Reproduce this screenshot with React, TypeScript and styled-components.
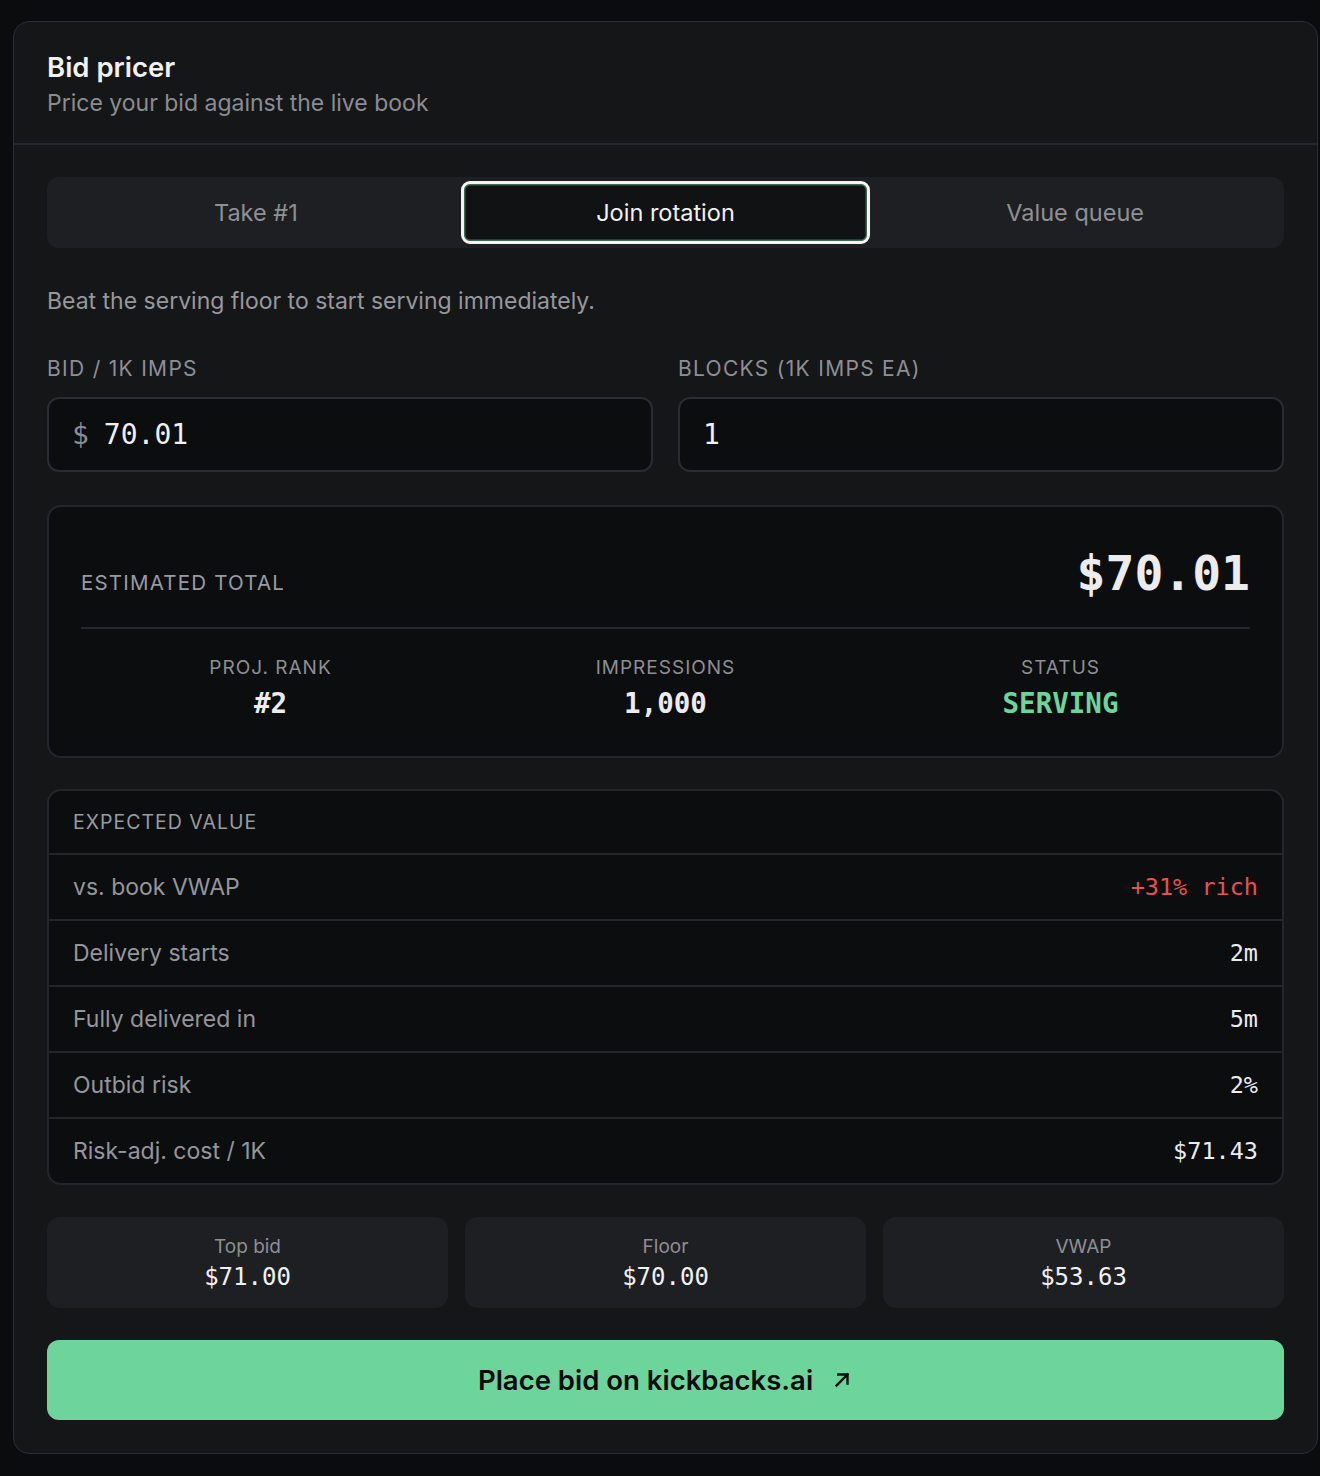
import styled, { createGlobalStyle } from "styled-components";

const GlobalStyle = createGlobalStyle`
  html, body {
    margin: 0;
    background: #0b0c0e;
  }
  body {
    padding: 21px 2px 22px 13px;
    font-family: "Inter", "Noto Sans", sans-serif;
    color: #ececee;
  }
`;

const MONO = `"DejaVu Sans Mono", "Liberation Mono", monospace`;

const tabs = ["Take #1", "Join rotation", "Value queue"];

const evRows = [
  { label: "vs. book VWAP", value: "+31% rich", tone: "bad" },
  { label: "Delivery starts", value: "2m" },
  { label: "Fully delivered in", value: "5m" },
  { label: "Outbid risk", value: "2%" },
  { label: "Risk-adj. cost / 1K", value: "$71.43" },
];

const book = [
  { label: "Top bid", value: "$71.00" },
  { label: "Floor", value: "$70.00" },
  { label: "VWAP", value: "$53.63" },
];

export default function App() {
  return (
    <>
      <GlobalStyle />
      <Card>
        <Header>
          <Title>Bid pricer</Title>
          <Subtitle>Price your bid against the live book</Subtitle>
        </Header>
        <Body>
          <Tabs>
            {tabs.map((t, i) => (
              <Tab key={t} $active={i === 1}>
                {t}
              </Tab>
            ))}
          </Tabs>

          <Hint>Beat the serving floor to start serving immediately.</Hint>

          <Fields>
            <Field>
              <Label>Bid / 1K imps</Label>
              <InputBox>
                <Prefix>$</Prefix>
                <InputValue>70.01</InputValue>
              </InputBox>
            </Field>
            <Field>
              <Label>Blocks (1K imps ea)</Label>
              <InputBox>
                <InputValue>1</InputValue>
              </InputBox>
            </Field>
          </Fields>

          <TotalBox>
            <TotalRow>
              <TotalLabel>Estimated total</TotalLabel>
              <TotalValue>$70.01</TotalValue>
            </TotalRow>
            <Stats>
              <Stat>
                <StatLabel>Proj. rank</StatLabel>
                <StatValue>#2</StatValue>
              </Stat>
              <Stat>
                <StatLabel>Impressions</StatLabel>
                <StatValue>1,000</StatValue>
              </Stat>
              <Stat>
                <StatLabel>Status</StatLabel>
                <StatValue $green>SERVING</StatValue>
              </Stat>
            </Stats>
          </TotalBox>

          <Table>
            <TableHead>Expected value</TableHead>
            {evRows.map((r) => (
              <Row key={r.label}>
                <RowLabel>{r.label}</RowLabel>
                <RowValue $bad={r.tone === "bad"}>{r.value}</RowValue>
              </Row>
            ))}
          </Table>

          <Book>
            {book.map((b) => (
              <BookItem key={b.label}>
                <BookLabel>{b.label}</BookLabel>
                <BookValue>{b.value}</BookValue>
              </BookItem>
            ))}
          </Book>

          <PlaceBtn>
            Place bid on kickbacks.ai
            <svg width="22" height="22" viewBox="0 0 24 24" fill="none" stroke="#0b0c0e" strokeWidth="2.6" strokeLinecap="square">
              <path d="M6 18L18 6" />
              <path d="M8 6h10v10" />
            </svg>
          </PlaceBtn>
        </Body>
      </Card>
    </>
  );
}

const Card = styled.div`
  width: 1305px;
  background: #151618;
  border: 1px solid #2c2d31;
  border-radius: 16px;
  box-sizing: border-box;
`;

const Header = styled.div`
  padding: 28px 33px 25px;
  border-bottom: 2px solid #26272b;
`;

const Title = styled.div`
  font-size: 27.5px;
  font-weight: 600;
  color: #f1f1f3;
  line-height: 34px;
`;

const Subtitle = styled.div`
  font-size: 23px;
  color: #8b8c92;
  line-height: 30px;
  margin-top: 4px;
`;

const Body = styled.div`
  padding: 32px 33px 33px 33px;
  display: flex;
  flex-direction: column;
`;

const Tabs = styled.div`
  display: grid;
  grid-template-columns: repeat(3, 1fr);
  background: #1e1f22;
  border-radius: 12px;
  padding: 4px;
  height: 71px;
  box-sizing: border-box;
`;

const Tab = styled.div<{ $active?: boolean }>`
  display: flex;
  align-items: center;
  justify-content: center;
  font-size: 23.5px;
  border-radius: 9px;
  color: ${(p) => (p.$active ? "#f1f1f3" : "#8f9096")};
  background: ${(p) => (p.$active ? "#111214" : "transparent")};
  border: ${(p) => (p.$active ? "3px solid #f4f5f4" : "3px solid transparent")};
  box-shadow: ${(p) => (p.$active ? "inset 0 0 0 1.5px #3f6b55" : "none")};
`;

const Hint = styled.div`
  font-size: 23px;
  color: #97989e;
  margin-top: 38px;
  line-height: 30px;
`;

const Fields = styled.div`
  display: grid;
  grid-template-columns: 1fr 1fr;
  gap: 25px;
  margin-top: 39px;
`;

const Field = styled.div`
  display: flex;
  flex-direction: column;
`;

const Label = styled.div`
  font-size: 21px;
  letter-spacing: 1.3px;
  text-transform: uppercase;
  color: #8e8f95;
  line-height: 28px;
  margin-bottom: 14px;
`;

const InputBox = styled.div`
  height: 75px;
  box-sizing: border-box;
  background: #0c0d0f;
  border: 2px solid #2b2c30;
  border-radius: 12px;
  display: flex;
  align-items: center;
  padding: 0 23px;
  gap: 15px;
  font-family: ${MONO};
  font-size: 28px;
`;

const Prefix = styled.span`
  color: #8b8c92;
`;

const InputValue = styled.span`
  color: #f1f1f3;
`;

const TotalBox = styled.div`
  margin-top: 33px;
  background: #0c0d0f;
  border: 2px solid #24252a;
  border-radius: 14px;
  padding: 38px 32px 36px;
  display: flex;
  flex-direction: column;
`;

const TotalRow = styled.div`
  display: flex;
  justify-content: space-between;
  align-items: center;
  padding-bottom: 26px;
  border-bottom: 2px solid #26272b;
`;

const TotalLabel = styled.div`
  font-size: 20.5px;
  letter-spacing: 1.2px;
  text-transform: uppercase;
  color: #9a9ba1;
  margin-top: 18px;
`;

const TotalValue = styled.div`
  font-family: ${MONO};
  font-size: 48px;
  font-weight: 700;
  color: #ececee;
  line-height: 56px;
`;

const Stats = styled.div`
  display: grid;
  grid-template-columns: repeat(3, 1fr);
  padding-top: 26px;
  margin: 0 -8px;
`;

const Stat = styled.div`
  display: flex;
  flex-direction: column;
  align-items: center;
  gap: 5px;
`;

const StatLabel = styled.div`
  font-size: 19px;
  letter-spacing: 1px;
  text-transform: uppercase;
  color: #8e8f95;
  line-height: 26px;
`;

const StatValue = styled.div<{ $green?: boolean }>`
  font-family: ${MONO};
  font-size: 27.5px;
  font-weight: 700;
  line-height: 34px;
  color: ${(p) => (p.$green ? "#6dd49b" : "#ececee")};
`;

const Table = styled.div`
  margin-top: 31px;
  background: #0c0d0f;
  border: 2px solid #24252a;
  border-radius: 14px;
  overflow: hidden;
`;

const TableHead = styled.div`
  height: 62px;
  display: flex;
  align-items: center;
  padding: 0 24px;
  font-size: 19.5px;
  letter-spacing: 1px;
  text-transform: uppercase;
  color: #9a9ba1;
`;

const Row = styled.div`
  height: 66px;
  box-sizing: border-box;
  border-top: 2px solid #24252a;
  display: flex;
  align-items: center;
  justify-content: space-between;
  padding: 0 24px;
`;

const RowLabel = styled.div`
  font-size: 23px;
  color: #95969c;
`;

const RowValue = styled.div<{ $bad?: boolean }>`
  font-family: ${MONO};
  font-size: 23.5px;
  color: ${(p) => (p.$bad ? "#e5534b" : "#ececee")};
`;

const Book = styled.div`
  margin-top: 32px;
  display: grid;
  grid-template-columns: repeat(3, 1fr);
  gap: 17px;
`;

const BookItem = styled.div`
  background: #1e1f22;
  border-radius: 13px;
  height: 91px;
  display: flex;
  flex-direction: column;
  align-items: center;
  justify-content: center;
  gap: 2px;
`;

const BookLabel = styled.div`
  font-size: 19px;
  color: #8e8f95;
  line-height: 26px;
`;

const BookValue = styled.div`
  font-family: ${MONO};
  font-size: 24px;
  color: #f1f1f3;
  line-height: 30px;
`;

const PlaceBtn = styled.div`
  margin-top: 32px;
  height: 80px;
  background: #6dd49b;
  border-radius: 12px;
  display: flex;
  align-items: center;
  justify-content: center;
  gap: 18px;
  font-size: 27.5px;
  font-weight: 600;
  color: #0b0c0e;
`;
